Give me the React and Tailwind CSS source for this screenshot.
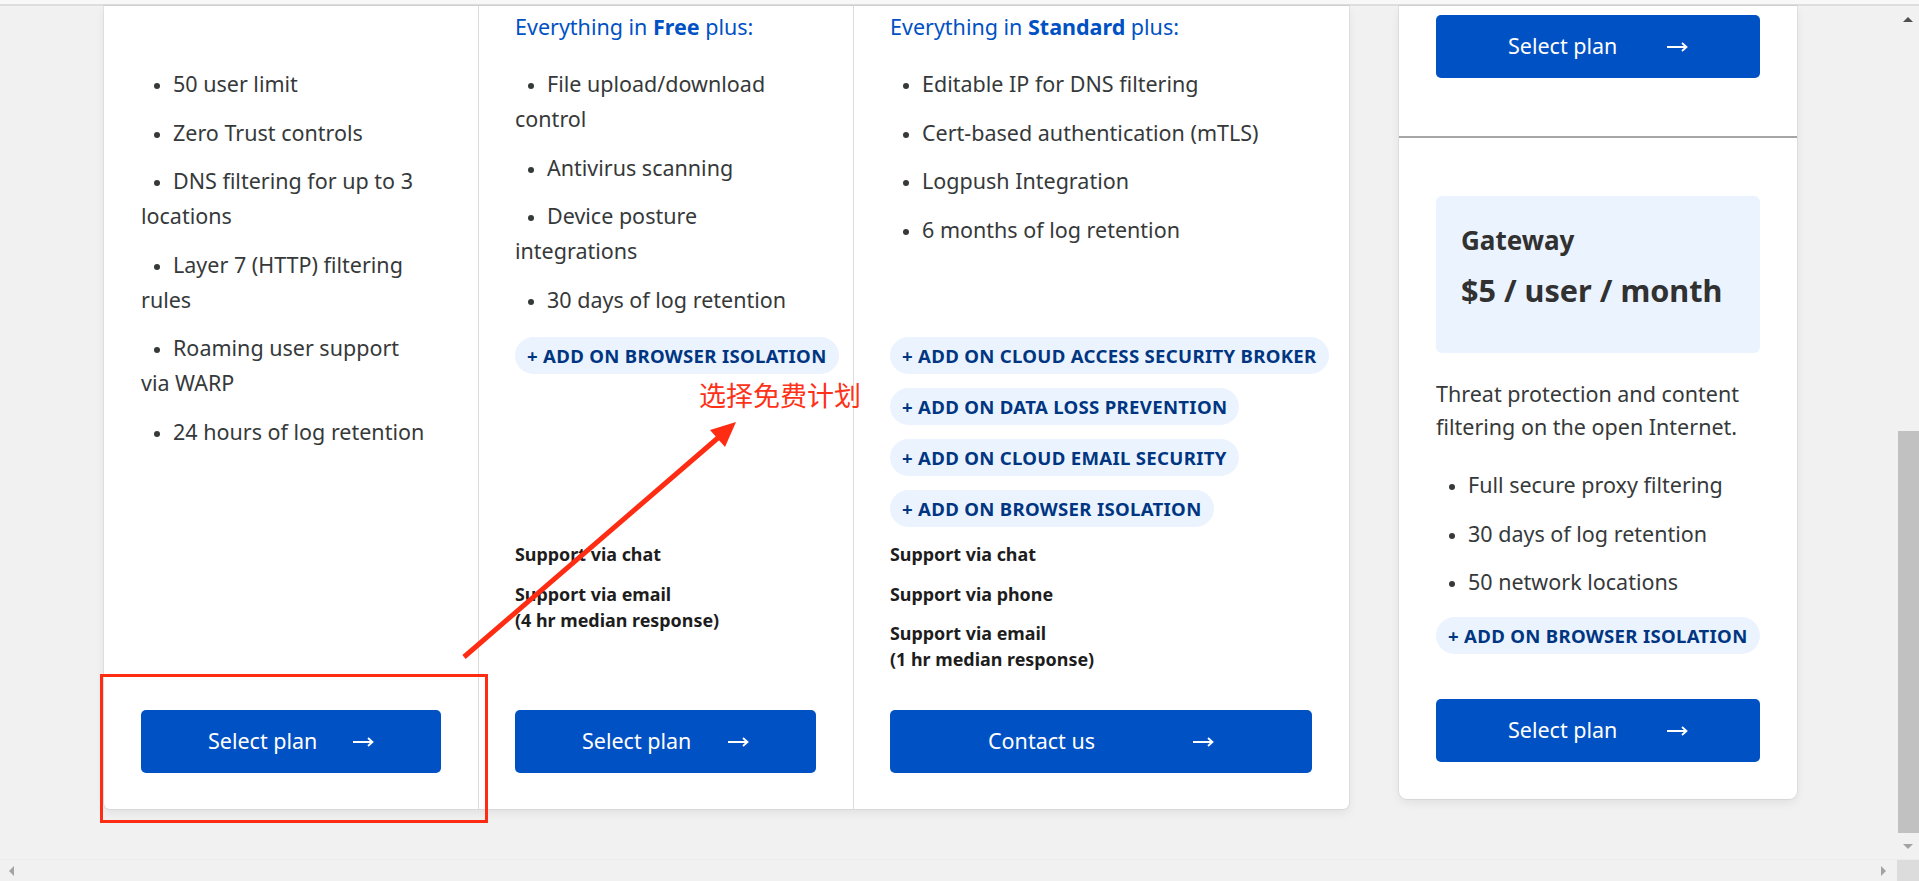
import React from 'react';

const font = "font-['Noto_Sans','Open_Sans',sans-serif]";

const Arrow = () => (
  <svg width="21" height="10" viewBox="0 0 21 10" className="shrink-0">
    <path d="M0 5H19.5M15 1l4.5 4-4.5 4" stroke="white" strokeWidth="1.8" fill="none" />
  </svg>
);

const Bullets = ({ items }) => (
  <ul className="flex flex-col gap-[13.5px] text-[21.5px] leading-[35px] text-[#36393a]">
    {items.map((lines, i) => (
      <li key={i} className="whitespace-nowrap">
        <span className="inline-flex w-[32px] justify-center align-middle">
          <span className="h-[6px] w-[6px] rounded-full bg-[#36393a]" />
        </span>
        {lines[0]}
        {lines.slice(1).map((l, j) => (
          <div key={j}>{l}</div>
        ))}
      </li>
    ))}
  </ul>
);

const Pill = ({ children }) => (
  <div className="inline-flex h-[37px] items-center self-start whitespace-nowrap rounded-full bg-[#ebf3ff] px-[12px] text-[18.6px] font-bold tracking-[0.3px] text-[#003681]">
    + {children}
  </div>
);

const PlanButton = ({ label, pad }) => (
  <button className={`flex h-[63px] w-full shrink-0 items-center justify-between rounded-[5px] bg-[#0051c3] text-[21.5px] text-white ${pad}`}>
    <span>{label}</span>
    <Arrow />
  </button>
);

const Column = ({ header, items, pills = [], support = [], label, pad, className }) => (
  <div className={`flex h-full flex-col px-[37px] ${className}`}>
    <div className="h-[60px] shrink-0 pt-[3px] text-[21.5px] leading-[35px] text-[#0051c3]">
      {header && (
        <>
          Everything in <b>{header}</b> plus:
        </>
      )}
    </div>
    <div className="h-[271px] shrink-0">
      <Bullets items={items} />
    </div>
    <div className="flex h-[204px] shrink-0 flex-col gap-[14px]">
      {pills.map((p) => (
        <Pill key={p}>{p}</Pill>
      ))}
    </div>
    <div className="flex h-[169px] shrink-0 flex-col gap-[13.5px] text-[17.9px] font-bold leading-[26px] text-[#1d1d1d]">
      {support.map((s, i) => (
        <div key={i}>
          {s.map((l) => (
            <div key={l}>{l}</div>
          ))}
        </div>
      ))}
    </div>
    <PlanButton label={label} pad={pad} />
  </div>
);

export default function App() {
  return (
    <div className={`relative h-[881px] w-[1919px] overflow-hidden bg-[#f1f1f1] ${font}`}>
      <div className="h-[4px] bg-[#f8f8f8]" />
      <div className="h-[2px] bg-[#dedede]" />

      <div className="flex h-[853px]">
        <div className="flex flex-1 items-start gap-[50px] pl-[104px]">
          {/* main plans card */}
          <div className="grid h-[803px] w-[1245px] grid-cols-[374px_375px_496px] rounded-b-[6px] bg-white shadow-[0_0_0_1px_rgba(0,0,0,0.05),0_4px_10px_rgba(0,0,0,0.07)]">
            <Column
              items={[
                ['50 user limit'],
                ['Zero Trust controls'],
                ['DNS filtering for up to 3', 'locations'],
                ['Layer 7 (HTTP) filtering', 'rules'],
                ['Roaming user support', 'via WARP'],
                ['24 hours of log retention'],
              ]}
              label="Select plan"
              pad="px-[67px]"
            />
            <Column
              className="border-l border-[#dcdcdc] pl-[36px]"
              header="Free"
              items={[
                ['File upload/download', 'control'],
                ['Antivirus scanning'],
                ['Device posture', 'integrations'],
                ['30 days of log retention'],
              ]}
              pills={['ADD ON BROWSER ISOLATION']}
              support={[['Support via chat'], ['Support via email', '(4 hr median response)']]}
              label="Select plan"
              pad="px-[67px]"
            />
            <Column
              className="border-l border-[#dcdcdc] pl-[36px]"
              header="Standard"
              items={[
                ['Editable IP for DNS filtering'],
                ['Cert-based authentication (mTLS)'],
                ['Logpush Integration'],
                ['6 months of log retention'],
              ]}
              pills={[
                'ADD ON CLOUD ACCESS SECURITY BROKER',
                'ADD ON DATA LOSS PREVENTION',
                'ADD ON CLOUD EMAIL SECURITY',
                'ADD ON BROWSER ISOLATION',
              ]}
              support={[['Support via chat'], ['Support via phone'], ['Support via email', '(1 hr median response)']]}
              label="Contact us"
              pad="px-[98px]"
            />
          </div>

          {/* add-on card */}
          <div className="flex h-[793px] w-[398px] flex-col rounded-b-[8px] bg-white shadow-[0_0_0_1px_rgba(0,0,0,0.05),0_4px_10px_rgba(0,0,0,0.07)]">
            <div className="px-[37px] pb-[58px] pt-[9px]">
              <PlanButton label="Select plan" pad="px-[72px]" />
            </div>
            <div className="h-[2px] bg-[#a6a6a6]" />
            <div className="flex flex-col px-[37px] pt-[58px]">
              <div className="h-[157px] rounded-[6px] bg-[#ebf3ff] px-[25px] pt-[28px] text-[#313131]">
                <div className="text-[26px] font-bold leading-[32px]">Gateway</div>
                <div className="mt-[16px] text-[30.6px] font-bold leading-[36px]">$5 / user / month</div>
              </div>
              <p className="mt-[24px] whitespace-nowrap text-[21.5px] leading-[33px] text-[#36393a]">
                Threat protection and content
                <br />
                filtering on the open Internet.
              </p>
              <div className="mt-[24px]">
                <Bullets items={[['Full secure proxy filtering'], ['30 days of log retention'], ['50 network locations']]} />
              </div>
              <div className="mt-[18px] flex flex-col">
                <Pill>ADD ON BROWSER ISOLATION</Pill>
              </div>
              <div className="mt-[45px]">
                <PlanButton label="Select plan" pad="px-[72px]" />
              </div>
            </div>
          </div>
        </div>

        {/* vertical scrollbar */}
        <div className="flex w-[22px] flex-col bg-[#f1f1f1]">
          <div className="flex h-[26px] items-center justify-center">
            <div className="h-0 w-0 border-x-[5px] border-b-[5px] border-x-transparent border-b-[#505050]" />
          </div>
          <div className="flex-1 pt-[399px]">
            <div className="ml-[1px] h-[402px] w-[21px] bg-[#c1c1c1]" />
          </div>
          <div className="flex h-[26px] items-center justify-center">
            <div className="h-0 w-0 border-x-[5px] border-t-[5px] border-x-transparent border-t-[#a3a3a3]" />
          </div>
        </div>
      </div>

      {/* horizontal scrollbar */}
      <div className="flex h-[22px] items-center border-t border-[#ebebeb] bg-[#f1f1f1]">
        <div className="ml-[9px] h-0 w-0 border-y-[5px] border-r-[5px] border-y-transparent border-r-[#a3a3a3]" />
        <div className="flex-1" />
        <div className="mr-[11px] h-0 w-0 border-y-[5px] border-l-[5px] border-y-transparent border-l-[#a3a3a3]" />
        <div className="h-full w-[22px] bg-[#dcdcdc]" />
      </div>

      {/* annotation */}
      <div className="absolute left-[100px] top-[674px] h-[149px] w-[388px] border-[3px] border-[#fd2c12]" />
      <div className="absolute left-[699px] top-[380px] whitespace-nowrap font-['Noto_Sans_CJK_SC',sans-serif] text-[27px] leading-[30px] text-[#fd3218]">
        选择免费计划
      </div>
      <svg className="pointer-events-none absolute left-0 top-0" width="1919" height="881">
        <line x1="464" y1="657" x2="719" y2="437" stroke="#fd2c12" strokeWidth="5" />
        <polygon points="736,422 725,447 710,430" fill="#fd2c12" />
      </svg>
    </div>
  );
}
